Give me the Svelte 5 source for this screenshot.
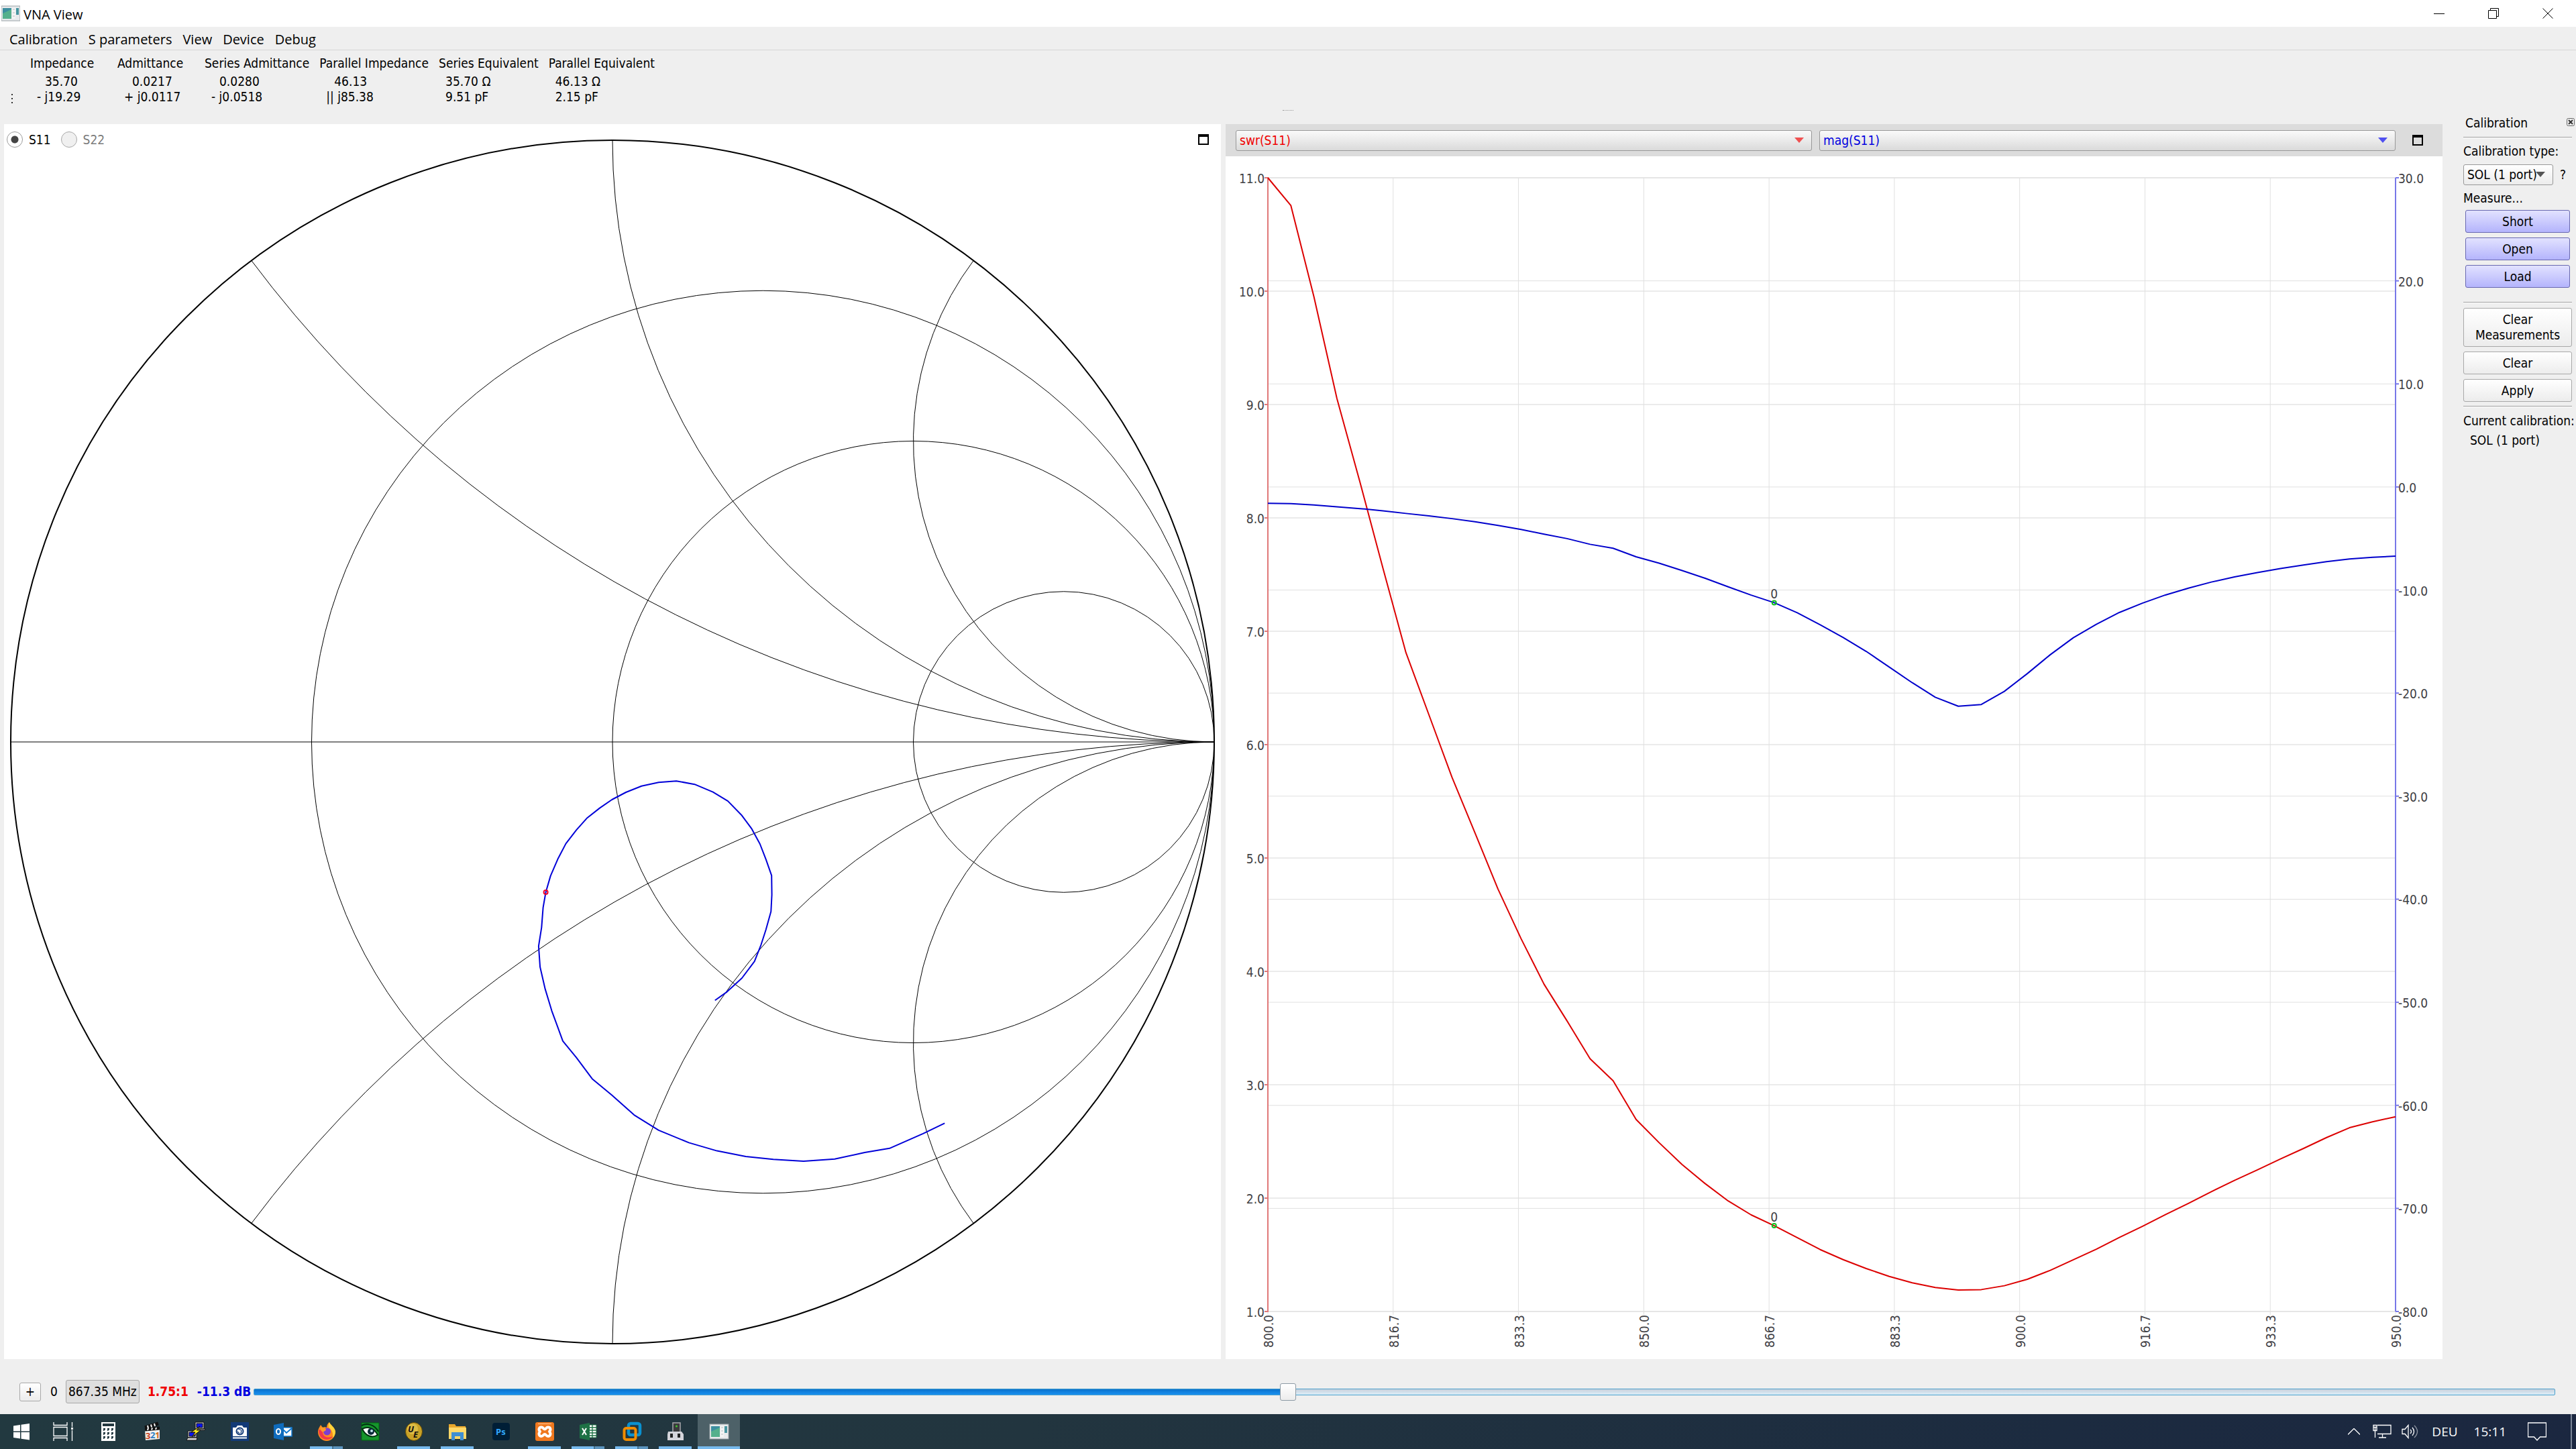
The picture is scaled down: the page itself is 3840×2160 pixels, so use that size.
<script>
  const menus = ['Calibration', 'S parameters', 'View', 'Device', 'Debug'];

  const readings = [
    { title: 'Impedance', re: '35.70', im: '- j19.29', complex: true, wide: true },
    { title: 'Admittance', re: '0.0217', im: '+ j0.0117', complex: true, wide: true },
    { title: 'Series Admittance', re: '0.0280', im: '- j0.0518', complex: true },
    { title: 'Parallel Impedance', re: '46.13', im: '|| j85.38', complex: true },
    { title: 'Series Equivalent', re: '35.70 Ω', im: '9.51 pF' },
    { title: 'Parallel Equivalent', re: '46.13 Ω', im: '2.15 pF' },
  ];

  // Smith chart, origin in the middle of the chart
  const R = 897;
  const resistances = [1 / 3, 1, 3];
  const reactances = [0.5, 1, 2, -0.5, -1, -2];

  function reactanceArc(x) {
    const a = 2 * Math.atan(1 / x);
    const r = R / Math.abs(x);
    return `M ${R * Math.cos(a)} ${-R * Math.sin(a)} A ${r} ${r} 0 0 ${x > 0 ? 0 : 1} ${R} 0`;
  }

  const s11 = [
    [152.8, 385.2], [170.6, 372.6], [193, 352], [211.7, 327.2], [221.5, 302.3],
    [228.7, 280], [236.3, 252.7], [237.6, 227.8], [237.2, 199.2], [228.7, 174.8],
    [219.8, 152], [207.7, 129.7], [192.1, 108.7], [172, 88.1], [149.7, 74.6],
    [122.4, 63.2], [95.2, 58.2], [68.9, 60.3], [43.4, 65.8], [20.2, 75],
    [-0.8, 86], [-19.1, 98.6], [-38.3, 113.8], [-53.9, 131.4], [-69.5, 151.6],
    [-81.6, 174.8], [-92.3, 199.6], [-99.4, 224], [-103.4, 246.8], [-105.7, 276.6],
    [-110.1, 304.4], [-107.9, 335.6], [-100.3, 368.4], [-90.5, 400.8], [-74, 445.8],
    [-53.9, 470.3], [-30.2, 502.2], [-1.2, 526.2], [32.3, 556.1], [68.9, 578.8],
    [113.9, 597.4], [155.9, 609.6], [198.8, 618], [239.8, 622.2], [284.9, 625.1],
    [331.3, 621.8], [376, 612.1], [413, 605.8], [463, 583.9], [495.2, 568.3],
  ];

  // Frequency sweep, 50 points from 800 to 950 MHz
  const swr = [
    11, 10.755, 9.951, 9.053, 8.317, 7.556, 6.811, 6.262, 5.712, 5.221,
    4.726, 4.289, 3.887, 3.563, 3.229, 3.036, 2.694, 2.489, 2.296, 2.128,
    1.975, 1.852, 1.757, 1.651, 1.546, 1.457, 1.379, 1.309, 1.253, 1.211,
    1.189, 1.193, 1.227, 1.284, 1.363, 1.456, 1.55, 1.653, 1.751, 1.854,
    1.954, 2.057, 2.156, 2.249, 2.345, 2.438, 2.534, 2.621, 2.673, 2.718,
  ];
  const mag = swr.map((s) => 20 * Math.log10((s - 1) / (s + 1)));

  const plot = { left: 63, right: 1744, top: 32, bottom: 1722 };
  const px = (i) => plot.left + (i / 49) * (plot.right - plot.left);
  const swrY = (v) => plot.bottom - ((v - 1) / 10) * (plot.bottom - plot.top);
  const magY = (v) => plot.top + ((30 - v) / 110) * (plot.bottom - plot.top);

  const swrTicks = Array.from({ length: 11 }, (_, i) => i + 1);
  const magTicks = Array.from({ length: 12 }, (_, i) => 30 - i * 10);
  const freqTicks = Array.from({ length: 10 }, (_, i) => i);

  const swrLine = swr.map((v, i) => `${px(i)},${swrY(v)}`).join(' ');
  const magLine = mag.map((v, i) => `${px(i)},${magY(v)}`).join(' ');
  const marker = 22;

  let frequency = 867.35;
  let port = 'S11';
  $: sliderFill = ((frequency - 800) / 150) * 100;

  const apps = [
    { id: 'start' }, { id: 'tasks' }, { id: 'calc' }, { id: 'clapper' }, { id: 'putty' },
    { id: 'camera' }, { id: 'outlook' }, { id: 'firefox', open: 'many' }, { id: 'eye' },
    { id: 'ue', open: 'one' }, { id: 'files', open: 'one' }, { id: 'ps' },
    { id: 'xampp', open: 'one' }, { id: 'excel', open: 'many' }, { id: 'vmware', open: 'many' },
    { id: 'usb', open: 'one' }, { id: 'vna', open: 'active' },
  ];
</script>

{#snippet appIcon()}
  <rect x="0" y="3" width="28" height="22" fill="#e8eaec" stroke="#9aa3a8" />
  <rect x="2" y="6" width="13" height="16" fill="#3d8fa0" />
  <path d="M2 22 L2 14 L15 8 V22Z" fill="#55b08c" />
  <rect x="16" y="6" width="5" height="16" fill="#f4f4f4" />
  <path d="M17 8h3M17 13h3M17 18h3" stroke="#b8bec2" />
  <rect x="22" y="6" width="4" height="10" fill="#4795a0" />
{/snippet}

<div class="screen">
  <header class="titlebar">
    <svg class="icon" viewBox="0 0 28 28" aria-hidden="true">{@render appIcon()}</svg>
    <h1>VNA View</h1>
    <div class="window-buttons">
      <button aria-label="Minimize"><svg viewBox="0 0 16 16"><path d="M0 8.5h16" /></svg></button>
      <button aria-label="Restore"><svg viewBox="0 0 16 16"><path d="M.5 3.500h12v12h-12zM3.500 3.500v-3h12v12h-3" /></svg></button>
      <button aria-label="Close"><svg viewBox="0 0 16 16"><path d="M.5.5l15 15M15.500.5l-15 15" /></svg></button>
    </div>
  </header>

  <nav class="menubar">
    {#each menus as menu}
      <button>{menu}</button>
    {/each}
  </nav>

  <section class="toolbar">
    <svg class="grip" viewBox="0 0 4 14" aria-hidden="true"><path d="M1 0h2v2h-2zM1 6h2v2h-2zM1 12h2v2h-2z" /></svg>
    <table>
      <thead>
        <tr>
          {#each readings as r}<th class:wide={r.wide}>{r.title}</th>{/each}
        </tr>
      </thead>
      <tbody>
        <tr>
          {#each readings as r}<td class:complex={r.complex}>{r.re}</td>{/each}
        </tr>
        <tr>
          {#each readings as r}<td>{r.im}</td>{/each}
        </tr>
      </tbody>
    </table>
    <span class="splitter"></span>
  </section>

  <main>
    <section class="panel smith">
      <div class="smith-bar">
        <label><input type="radio" name="port" value="S11" bind:group={port} />S11</label>
        <label class="off"><input type="radio" name="port" value="S22" bind:group={port} disabled />S22</label>
        <button class="maximize" aria-label="Maximize Smith chart"></button>
      </div>
      <svg viewBox="-907 -921 1814 1841">
        <g class="smith-grid">
          <path d="M {-R} 0 H {R}" />
          {#each resistances as r}
            <circle cx={(R * r) / (1 + r)} cy="0" r={R / (1 + r)} />
          {/each}
          {#each reactances as x}
            <path d={reactanceArc(x)} />
          {/each}
        </g>
        <circle class="smith-edge" cx="0" cy="0" r={R} />
        <polyline class="smith-trace" points={s11.map((p) => p.join(',')).join(' ')} />
        <circle class="smith-marker" cx="-99.4" cy="224" r="3" />
      </svg>
    </section>

    <section class="panel graph">
      <div class="graph-bar">
        <div class="combo red">
          <select aria-label="Left axis"><option>swr(S11)</option></select>
          <svg viewBox="0 0 14 8" aria-hidden="true"><path d="M0 0h14l-7 8z" /></svg>
        </div>
        <div class="combo blue">
          <select aria-label="Right axis"><option>mag(S11)</option></select>
          <svg viewBox="0 0 14 8" aria-hidden="true"><path d="M0 0h14l-7 8z" /></svg>
        </div>
        <button class="maximize" aria-label="Maximize graph"></button>
      </div>
      <svg viewBox="0 0 1814 1793">
        <g class="grid-main">
          {#each swrTicks as t}<path d="M {plot.left} {swrY(t)} H {plot.right}" />{/each}
        </g>
        <g class="grid">
          {#each magTicks as t}<path d="M {plot.left} {magY(t)} H {plot.right}" />{/each}
          {#each freqTicks as t}
            <path d="M {px((t * 49) / 9)} {plot.top} V {plot.bottom + 5}" />
          {/each}
        </g>
        <g class="axis-left">
          <path d="M {plot.left} {plot.top} V {plot.bottom}" />
          {#each swrTicks as t}<path d="M {plot.left - 5} {swrY(t)} h 6" />{/each}
        </g>
        <g class="axis-right">
          <path d="M {plot.right} {plot.top} V {plot.bottom}" />
          {#each magTicks as t}<path d="M {plot.right} {magY(t)} h 5" />{/each}
        </g>
        <g class="tick-labels">
          {#each swrTicks as t}
            <text x={plot.left - 5} y={swrY(t) + 8} text-anchor="end">{t.toFixed(1)}</text>
          {/each}
          {#each magTicks as t}
            <text x={plot.right + 4} y={magY(t) + 8}>{t.toFixed(1)}</text>
          {/each}
          {#each freqTicks as t}
            <text transform="translate({px((t * 49) / 9) + 8} {plot.bottom + 5}) rotate(-90)" text-anchor="end">{(800 + (t * 150) / 9).toFixed(1)}</text>
          {/each}
        </g>
        <polyline class="swr-line" points={swrLine} />
        <polyline class="mag-line" points={magLine} />
        {#each [swrY(swr[marker]), magY(mag[marker])] as y}
          <circle class="marker" cx={px(marker)} cy={y} r="3" />
          <text class="marker-label" x={px(marker)} y={y - 6} text-anchor="middle">0</text>
        {/each}
      </svg>
    </section>

    <aside>
      <div class="dock-title">
        <h2>Calibration</h2>
        <button aria-label="Close calibration">
          <svg viewBox="0 0 12 12"><rect x=".5" y=".5" width="11" height="11" rx="2" /><path d="M3 3l6 6M9 3l-6 6" /></svg>
        </button>
      </div>
      <hr />
      <label class="type-label" for="cal-type">Calibration type:</label>
      <div class="type-row">
        <div class="combo">
          <select id="cal-type"><option>SOL (1 port)</option></select>
          <svg viewBox="0 0 14 8" aria-hidden="true"><path d="M0 0h14l-7 8z" /></svg>
        </div>
        <span>?</span>
      </div>
      <p class="measure-label">Measure...</p>
      <div class="measure">
        <button class="btn done">Short</button>
        <button class="btn done">Open</button>
        <button class="btn done">Load</button>
      </div>
      <hr />
      <div class="actions">
        <button class="btn tall">Clear Measurements</button>
        <button class="btn">Clear</button>
        <button class="btn">Apply</button>
      </div>
      <hr />
      <p class="current">Current calibration:</p>
      <p class="current-value">SOL (1 port)</p>
    </aside>
  </main>

  <section class="marker-row">
    <button class="btn add">+</button>
    <label for="marker-freq">0</label>
    <button class="btn freq">867.35 MHz</button>
    <b class="swr-value">1.75:1</b>
    <b class="mag-value">-11.3 dB</b>
    <input
      id="marker-freq"
      type="range"
      min="800"
      max="950"
      step="any"
      bind:value={frequency}
      style="--fill: {sliderFill}%"
    />
  </section>

  <footer class="taskbar">
    <div class="apps">
      {#each apps as app}
        <button class="app {app.open ?? ''}" aria-label={app.id}>
          <svg viewBox="0 0 28 28">
            {#if app.id === 'start'}
              <path fill="#fff" d="M2 5.500l10-1.500v9.500h-10zM13.500 3.800l12.500-1.800v11.500h-12.500zM2 15h10v9.500l-10-1.500zM13.500 15h12.500v11.500l-12.500-1.800z" />
            {:else if app.id === 'tasks'}
              <path fill="none" stroke="#fff" stroke-width="1.300" d="M-3 0v4.500h20v-4.500M-3 7.500h20v13h-20zM-3 28v-4.500h20v4.500M24.500 0v7M24.500 12v16" />
              <path fill="#fff" d="M23 8h3v3h-3z" />
            {:else if app.id === 'calc'}
              <path fill="#fff" d="M3 0h21v28h-21z" />
              <path fill="#22373f" d="M5 2h17v4h-17zM6 9h3v2l-2 2h-1zM12 9h3v2l-2 2h-1zM18 9h3v2l-2 2h-1zM6 15h3v2l-2 2h-1zM12 15h3v2l-2 2h-1zM18 15h3v2l-2 2h-1zM6 21h3v2l-2 2h-1zM12 21h3v2l-2 2h-1zM18 21h3v2l-2 2h-1z" />
            {:else if app.id === 'clapper'}
              <path fill="#f2f2f0" d="M3 11l22-2v16l-21 2z" />
              <path stroke="#111" stroke-width="5" d="M3 8l20-6M3 11l22-2" />
              <path stroke="#fff" stroke-width="2" d="M7 5l1 4M12 3.500l1 4M17 2l1 4M8 9l-1 3M14 8.500l-1 3M20 8l-1 3" />
              <text x="4" y="25" class="g321" fill="#c8401c">3</text>
              <text x="11" y="24" class="g321" fill="#2f7fc4">2</text>
              <text x="18" y="24" class="g321" fill="#d46a1c">1</text>
            {:else if app.id === 'putty'}
              <g stroke="#111">
                <path fill="#d8d8d8" d="M13 0h13v10h-13zM12 12h15l1-2h-14zM2 13h13v10h-13zM0 27l2-4h14l-1 4z" />
                <path fill="#0a14f0" d="M15 2h9v6h-9zM4 15h9v6h-9z" />
                <path fill="#ffec20" d="M20 6l-13 9h6l-5 7 13-10h-6z" />
              </g>
            {:else if app.id === 'camera'}
              <path fill="#123a78" d="M1 0h27v28h-27z" />
              <path fill="#fff" d="M4 8h5l2-3h7l2 3h5v13h-21z" />
              <circle cx="14.500" cy="13.500" r="5" fill="#fff" stroke="#123a78" stroke-width="2" />
              <path stroke="#123a78" stroke-width="1.300" d="M12 10l5 2M17 12l-1 5M14 17l-3-3" />
              <path stroke="#fff" stroke-width="2" d="M4 23.500h21" />
            {:else if app.id === 'outlook'}
              <path fill="#fff" stroke="#0f78d0" stroke-width="1.500" d="M13 8h14v13h-14z" />
              <path fill="none" stroke="#0f78d0" stroke-width="2" d="M14 11l5 5 8-7" />
              <path fill="#0f6cbd" d="M0 4l15-3v26l-15-3z" />
              <ellipse cx="7" cy="14" rx="3" ry="4" fill="none" stroke="#fff" stroke-width="2" />
            {:else if app.id === 'firefox'}
              <path fill="#ff8a1e" d="M5 4l3 4c2-1 4-1 6 0 0-3 1-6 4-8 1 4 8 7 9 14 0 8-6 14-13 14s-13-6-13-13c0-5 2-7 4-11z" />
              <path fill="#ffd23a" d="M18 0c1 4 8 7 9 14 0 4-2 8-4 9 1-8-2-12-6-15 -1-3 0-6 1-8z" />
              <path fill="#f0384c" d="M2 12c0 9 6 14 12 14 5 0 8-3 9-5-8 4-15 0-15-6 0-3-5-5-6-3z" />
              <circle cx="14.500" cy="14" r="5.500" fill="#7b3fd0" />
              <path fill="#ff9a2a" d="M5 8c4-1 7 0 8 3 0 2-3 2-4 4-3-1-5-4-4-7z" />
            {:else if app.id === 'eye'}
              <path fill="#16962c" stroke="#061" d="M1 1h26v26h-26z" />
              <path fill="#fff" stroke="#031" stroke-width="2" d="M2 10c8-4 17-2 23 9-8 5-18 2-23-9z" />
              <circle cx="15" cy="14" r="5" fill="#0a2a3a" />
              <circle cx="16" cy="13" r="2" fill="#bfe4ee" />
              <path fill="none" stroke="#031" stroke-width="2" d="M1 5c8-4 19-2 25 9" />
            {:else if app.id === 'ue'}
              <ellipse cx="14" cy="14" rx="12.500" ry="13.500" fill="#c9a227" stroke="#5e4708" />
              <circle cx="12" cy="10" r="8" fill="#e8cb58" opacity=".6" />
              <text x="5" y="15" class="gue">U</text>
              <text x="13" y="23" class="gue">E</text>
            {:else if app.id === 'files'}
              <path fill="#e8a72c" d="M1 3h9l2 3h14v5h-25z" />
              <path fill="#ffd868" d="M1 8h26v17h-26z" />
              <path fill="#3f8fd2" d="M5 15h18v12h-5v-6h-8v6h-5z" />
            {:else if app.id === 'ps'}
              <rect x="1" y="1" width="26" height="26" rx="4" fill="#001e36" />
              <text x="6" y="19" class="gps">Ps</text>
            {:else if app.id === 'xampp'}
              <rect width="28" height="28" rx="3" fill="#f0781e" />
              <path stroke="#ffc796" d="M4 2.500h20" />
              <path fill="none" stroke="#fff" stroke-width="4" stroke-linejoin="round" d="M9 7.500c3 0 3 3 5 3s2-3 5-3 5 3 2 6.500c3 3.500 1 7-2 7s-3-3-5-3-2 3-5 3-5-3.500-2-7c-3-3.500-1-6.500 2-6.500z" />
            {:else if app.id === 'excel'}
              <path fill="#fff" stroke="#1e7145" d="M14 4h12v19h-12z" />
              <path stroke="#1e7145" stroke-width="1.300" d="M15 8h11M15 12h11M15 16h11M15 20h11M20 4v19" />
              <path fill="#1e7145" d="M1 4l15-3v26l-15-3z" />
              <path stroke="#fff" stroke-width="2" d="M5 9l6 10M11 9l-6 10" />
            {:else if app.id === 'vmware'}
              <rect x="9" y="2" width="17" height="17" rx="3" fill="none" stroke="#0a91d0" stroke-width="4.500" />
              <rect x="2.500" y="9" width="17" height="17" rx="3" fill="none" stroke="#f08c00" stroke-width="4" />
            {:else if app.id === 'usb'}
              <path fill="#3a3a3c" stroke="#a8a8ac" stroke-width="1.500" d="M10 1h11v14h-11z" />
              <circle cx="15.500" cy="6" r="1.500" fill="#3ecb2c" />
              <path fill="#d4d4da" d="M3 14h20l3 4v9h-24v-9z" />
              <path fill="#222" d="M6 17h4v6h-4zM17 17h4v6h-4z" />
            {:else}
              {@render appIcon()}
            {/if}
          </svg>
        </button>
      {/each}
    </div>
    <div class="tray">
      <button aria-label="Show hidden icons"><svg class="chevron" viewBox="0 0 18 10"><path d="M0 9.500l9-9 9 9" /></svg></button>
      <button aria-label="Network"><svg class="net" viewBox="0 0 28 22"><path d="M7 1.500h20v13h-20M1 1.500h5v8h-5zM1 4.500h5M3.500 5v4M3.500 10v10M9 20h11M14.500 15v5" /></svg></button>
      <button aria-label="Volume"><svg class="vol" viewBox="0 0 27 22"><path d="M1 7.500h4l5-6v19l-5-6h-4zM13 8q3 3 0 6M16 5q5 6 0 12" /><path class="dim" d="M19 2q9 9 0 18" /></svg></button>
      <button class="lang">DEU</button>
      <time>15:11</time>
      <button aria-label="Notifications"><svg class="note" viewBox="0 0 28 28"><path d="M.5 1h27v21h-9l-4.500 5-4.500-5h-9z" /></svg></button>
    </div>
    <span class="desktop-edge"></span>
  </footer>
</div>

<style>
  :global(body) {
    margin: 0;
    background: #efefef;
  }

  .screen {
    display: flex;
    flex-direction: column;
    height: 100vh;
    font: 19px/23px "DejaVu Sans Condensed", "DejaVu Sans", sans-serif;
    color: #000;
  }

  .screen * {
    box-sizing: border-box;
  }

  button,
  select {
    margin: 0;
    padding: 0;
    border: 0;
    background: none;
    font: inherit;
    color: inherit;
  }

  h1,
  h2,
  p {
    margin: 0;
    font-size: inherit;
    font-weight: normal;
  }

  .titlebar {
    display: flex;
    align-items: center;
    height: 40px;
    padding-left: 2px;
    background: #fff;
    font-family: "Open Sans", sans-serif;
  }

  .titlebar h1 {
    flex: 1;
    padding: 2px 0 0 5px;
    font-size: 20px;
  }

  .titlebar .icon {
    width: 28px;
    height: 28px;
  }

  .window-buttons {
    display: flex;
    padding-right: 2px;
  }

  .window-buttons button {
    display: flex;
    justify-content: center;
    align-items: center;
    width: 81px;
    height: 40px;
  }

  .window-buttons svg {
    width: 16px;
    height: 16px;
    fill: none;
    stroke: #000;
  }

  .menubar {
    display: flex;
    gap: 16px;
    height: 35px;
    padding: 3px 14px 0;
    border-bottom: 1px solid #d7d7d7;
    font-family: "Open Sans", sans-serif;
    font-size: 20px;
  }

  .toolbar {
    position: relative;
    display: flex;
    height: 110px;
    padding: 8px 16px 0;
  }

  .grip {
    width: 4px;
    height: 14px;
    margin: 57px 25px 0 0;
    fill: #333;
  }

  table {
    border-collapse: collapse;
    align-self: flex-start;
  }

  th {
    height: 27px;
    padding: 0 15px 0 0;
    font-weight: normal;
    text-align: left;
    vertical-align: top;
    white-space: nowrap;
  }

  .wide {
    min-width: 130px;
  }

  td {
    padding: 0 0 0 10px;
    white-space: nowrap;
  }

  td.complex {
    padding-left: 22px;
  }

  .splitter {
    position: absolute;
    left: 50%;
    bottom: 20px;
    width: 16px;
    margin-left: -8px;
    border-bottom: 1px dotted #999;
  }

  main {
    flex: 1;
    min-height: 0;
    display: grid;
    grid-template-columns: 1fr 1fr 192px;
    column-gap: 7px;
    padding-left: 6px;
  }

  .panel {
    min-height: 0;
    background: #fff;
  }

  .smith {
    position: relative;
  }

  .panel > svg {
    display: block;
    width: 100%;
    height: 100%;
  }

  .smith-bar {
    position: absolute;
    inset: 0 0 auto 0;
    display: flex;
    align-items: center;
    gap: 15px;
    height: 46px;
    padding: 0 18px 0 4px;
  }

  .smith-bar label {
    display: flex;
    align-items: center;
    gap: 9px;
  }

  .smith-bar .off {
    color: #7c7c7c;
  }

  .smith-bar .maximize {
    margin-left: auto;
  }

  input[type='radio'] {
    appearance: none;
    width: 24px;
    height: 24px;
    margin: 0;
    border: 1px solid #9a9a9a;
    border-radius: 50%;
    background: #fff;
  }

  input[type='radio']:checked {
    background: radial-gradient(circle, #444 5px, #fff 6px);
  }

  input[type='radio']:disabled {
    background: #f0f0f0;
    border-color: #a8a8a8;
  }

  .maximize {
    width: 16px;
    height: 16px;
    border: 2px solid #000;
    border-top-width: 4px;
  }

  .smith-grid {
    fill: none;
    stroke: #000;
    stroke-width: 1;
  }

  .smith-edge {
    fill: none;
    stroke: #000;
    stroke-width: 2;
  }

  .smith-trace,
  .mag-line,
  .swr-line {
    fill: none;
    stroke-width: 2;
    stroke-linejoin: round;
  }

  .smith-trace {
    stroke: #0000d8;
  }

  .mag-line {
    stroke: #0000cc;
  }

  .swr-line {
    stroke: #dc0000;
  }

  .smith-marker {
    fill: none;
    stroke: #f00028;
    stroke-width: 2;
  }

  .graph {
    display: flex;
    flex-direction: column;
  }

  .graph > svg {
    flex: 1;
    min-height: 0;
  }

  .graph-bar {
    display: flex;
    align-items: center;
    gap: 11px;
    height: 48px;
    padding: 0 29px 0 15px;
    background: #dcdcdc;
  }

  .graph-bar .combo {
    flex: 1;
  }

  .graph-bar .maximize {
    margin-left: 14px;
  }

  .combo {
    position: relative;
  }

  .combo select {
    display: block;
    appearance: none;
    width: 100%;
    height: 31px;
    padding: 0 5px;
    border: 1px solid #989898;
    border-radius: 3px;
    background: linear-gradient(#fafafa, #dadada);
  }

  .combo svg {
    position: absolute;
    right: 12px;
    top: 11px;
    width: 14px;
    height: 8px;
    fill: #555;
    pointer-events: none;
  }

  .red select {
    color: #f00000;
  }

  .red svg {
    fill: #f05050;
  }

  .blue select {
    color: #0000e0;
  }

  .blue svg {
    fill: #5050f0;
  }

  .grid,
  .grid-main {
    stroke: #e0e0e0;
    stroke-width: 1;
  }

  .grid-main {
    stroke: #ebebeb;
    stroke-width: 2;
  }

  .axis-left,
  .axis-right {
    stroke: #e07878;
    stroke-width: 2;
  }

  .axis-right {
    stroke: #7878e8;
  }

  .tick-labels,
  .marker-label {
    font-size: 19px;
    fill: #404044;
  }

  .marker {
    fill: none;
    stroke: #10c020;
    stroke-width: 2;
  }

  aside {
    display: flex;
    flex-direction: column;
    padding: 0 6px 0 24px;
    white-space: nowrap;
    /* the dock title sits level with the end of the toolbar */
    margin-top: -13px;
  }

  .dock-title {
    display: flex;
    justify-content: space-between;
    height: 32px;
    padding-left: 3px;
    margin-right: -4px;
  }

  .dock-title button {
    height: 12px;
    margin-top: 4px;
  }

  .dock-title svg {
    display: block;
    width: 12px;
    height: 12px;
    fill: none;
    stroke: #666;
  }

  .dock-title path {
    stroke: #333;
    stroke-width: 2;
  }

  hr {
    width: 100%;
    margin: 0;
    border: 0;
    border-top: 1px solid #a0a0a0;
    border-bottom: 1px solid #fff;
  }

  .type-label {
    padding: 8px 0;
  }

  .type-row {
    display: flex;
    align-items: center;
    gap: 10px;
  }

  .type-row .combo {
    width: 134px;
  }

  .type-row select {
    background: linear-gradient(#fff, #ececec);
  }

  .measure-label {
    padding: 8px 0 6px;
  }

  .measure,
  .actions {
    display: flex;
    flex-direction: column;
    gap: 7px;
  }

  .measure {
    padding: 0 3px 21px;
  }

  .actions {
    padding: 7px 0 6px;
  }

  .btn {
    height: 34px;
    border: 1px solid #a8a8a8;
    border-radius: 3px;
    background: linear-gradient(#fff, #ececec);
  }

  .btn.tall {
    height: 58px;
    padding: 0 12px;
    white-space: normal;
  }

  .btn.done {
    border-color: #6868b0;
    background: linear-gradient(#e2e2ff, #b4b4fc);
  }

  .current {
    padding: 9px 0 6px;
  }

  .current-value {
    padding-left: 10px;
  }

  .marker-row {
    display: flex;
    align-items: center;
    height: 82px;
    padding: 15px 31px 0 29px;
    white-space: nowrap;
  }

  .add {
    width: 32px;
    height: 28px;
    margin-right: 14px;
  }

  .freq {
    width: 110px;
    height: 35px;
    margin: 0 12px;
    background: #dedede;
  }

  .swr-value {
    color: #f00000;
  }

  .mag-value {
    margin: 0 4px 0 13px;
    color: #0000e0;
  }

  input[type='range'] {
    appearance: none;
    flex: 1;
    min-width: 0;
    height: 10px;
    margin: 0;
    border: 1px solid #4ba0cc;
    border-radius: 2px;
    background:
      linear-gradient(#0a72cc, #1a90f0) 0 0 / var(--fill) 100% no-repeat,
      linear-gradient(#c8d0dc, #dceef8);
  }

  input[type='range']::-webkit-slider-thumb {
    appearance: none;
    width: 24px;
    height: 26px;
    border: 1px solid #8c9aa4;
    border-radius: 3px;
    background: linear-gradient(#fff, #ececec);
  }

  .taskbar {
    display: flex;
    height: 52px;
    background: linear-gradient(90deg, #223940, #22353f 40%, #1c2b40 80%, #1b2740);
    color: #fff;
    font-family: "Open Sans", sans-serif;
  }

  .apps {
    display: flex;
    gap: 2px;
    flex: 1;
  }

  .app {
    position: relative;
    display: flex;
    justify-content: center;
    align-items: center;
    width: 63px;
  }

  .app svg {
    width: 28px;
    height: 28px;
    overflow: visible;
  }

  .app::after {
    content: '';
    position: absolute;
    left: 7px;
    right: 7px;
    bottom: 0;
    height: 4px;
  }

  .one::after,
  .active::after {
    background: #76b9ed;
  }

  .many::after {
    background: linear-gradient(90deg, #76b9ed 33px, #47738f 33px 35px, #5b93bd 35px);
  }

  .active {
    background: #4d6168;
  }

  .active::after {
    left: 0;
    right: 0;
  }

  .g321 {
    font: bold 13px "Open Sans", sans-serif;
  }

  .gue {
    font: italic bold 13px "Open Sans", sans-serif;
    fill: #111;
  }

  .gps {
    font: bold 13px "Open Sans", sans-serif;
    fill: #31a8ff;
  }

  .tray {
    display: flex;
    align-items: center;
    padding-right: 36px;
  }

  .tray svg {
    display: block;
    fill: none;
    stroke: #fff;
    stroke-width: 1.3;
  }

  .tray .chevron {
    width: 18px;
    height: 10px;
    margin-right: 19px;
  }

  .tray .net {
    width: 28px;
    height: 22px;
    margin-right: 15px;
  }

  .tray .vol {
    width: 27px;
    height: 22px;
    margin-right: 18px;
  }

  .tray .dim {
    opacity: 0.5;
  }

  .lang {
    margin-right: 24px;
  }

  .tray time {
    margin-right: 32px;
  }

  .tray .note {
    width: 28px;
    height: 28px;
  }

  .desktop-edge {
    width: 8px;
    border-left: 2px solid #7a8496;
  }
</style>
